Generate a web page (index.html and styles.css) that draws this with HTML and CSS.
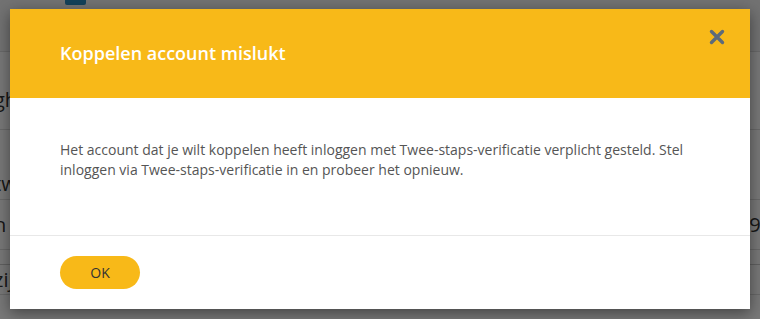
FILE: index.html
```
<!DOCTYPE html>
<html lang="nl">
<head>
<meta charset="utf-8">
<link rel="stylesheet" href="styles.css">
</head>
<body>
<div class="page">
  <div class="topbar"><span class="tab"></span><span class="topcell">n</span></div>
  <div class="row r1"><span class="cell">gh</span></div>
  <div class="row r2"><span class="cell">tw</span></div>
  <div class="row r3"><span class="cell">h</span><span class="cell right">94</span></div>
  <div class="row r4"><span class="cell">zij</span></div>
</div>
<div class="overlay"></div>
<div class="modal">
  <div class="modal-header">
    <h2 class="modal-title">Koppelen account mislukt</h2>
    <button class="close" aria-label="Sluiten">
      <svg width="16" height="16" viewBox="0 0 16 16"><path d="M2.5 2.5 L13.5 13.5 M13.5 2.5 L2.5 13.5" stroke="#5d6b7a" stroke-width="3.4" stroke-linecap="round"/></svg>
    </button>
  </div>
  <div class="modal-body">
    <p>Het account dat je wilt koppelen heeft inloggen met Twee-staps-verificatie verplicht gesteld. Stel inloggen via Twee-staps-verificatie in en probeer het opnieuw.</p>
  </div>
  <div class="modal-footer">
    <button class="ok">OK</button>
  </div>
</div>
</body>
</html>
```
FILE: styles.css
```
* { box-sizing: border-box; }
html, body { margin: 0; padding: 0; }
body {
  width: 760px;
  height: 319px;
  overflow: hidden;
  font-family: "Open Sans", "Liberation Sans", sans-serif;
  background: #fff;
  position: relative;
}
.page { width: 760px; height: 319px; overflow: hidden; }
.topbar {
  height: 52px;
  background: #f2f2f2;
  border-bottom: 1px solid #ddd;
  display: flex;
  align-items: flex-start;
  padding-left: 65px;
}
.topcell { display: none; }
.tab {
  display: block;
  width: 21px;
  height: 5px;
  background: #2a8bbd;
  border-radius: 0 0 2px 2px;
}
.row {
  display: flex;
  justify-content: space-between;
  border-bottom: 1px solid #ddd;
  font-size: 20px;
  line-height: 24px;
  color: #333;
}
.r1 { height: 78px; align-items: flex-start; padding-top: 36px; }
.r2 { height: 70px; align-items: flex-end; padding-bottom: 3px; }
.r3 { height: 50px; align-items: center; }
.r4 { height: 45px; align-items: center; border-top: 1px solid #ccc; margin-top: 14px; height: 31px; }
.cell { margin-left: -6px; }
.cell.right { margin-right: -12px; }
.overlay {
  position: absolute;
  inset: 0;
  background: rgba(0, 0, 0, 0.53);
}
.modal {
  position: absolute;
  left: 10px;
  top: 9px;
  width: 740px;
  height: 300px;
  background: #fff;
  display: flex;
  flex-direction: column;
  box-shadow: 0 4px 14px rgba(0, 0, 0, 0.45);
}
.modal-header {
  height: 89px;
  background: #f8b918;
  display: flex;
  align-items: flex-start;
  justify-content: space-between;
  padding: 0 24px 0 50px;
}
.modal-title {
  margin: 32px 0 0;
  font-size: 18px;
  font-weight: 600;
  color: #fff;
  line-height: 24px;
}
.close {
  margin-top: 19px;
  border: 0;
  background: none;
  padding: 0;
  width: 18px;
  height: 18px;
  display: flex;
  align-items: center;
  justify-content: center;
}
.modal-body {
  height: 138px;
  border-bottom: 1px solid #e8e8e8;
  padding: 42px 50px 0;
}
.modal-body p {
  margin: 0;
  font-size: 14px;
  line-height: 20px;
  color: #555;
}
.modal-footer {
  flex: 1;
  padding: 20px 50px 0;
}
.ok {
  width: 80px;
  height: 33px;
  border: 0;
  border-radius: 17px;
  background: #f8b918;
  color: #333;
  font-family: "Open Sans", "Liberation Sans", sans-serif;
  font-size: 14px;
}
```
